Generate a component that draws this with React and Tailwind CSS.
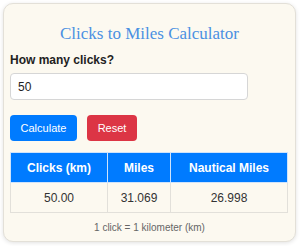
import React, { useState } from 'react';

const App = () => {
  const [clicks, setClicks] = useState('50');
  const km = parseFloat(clicks) || 0;

  return (
    <div className="w-[300px] h-[246px] bg-white p-[3px] font-['Liberation_Sans',Arial,sans-serif]">
      <div className="h-[239px] w-[293px] bg-[#fcf9f0] border border-[#e3e0d8] rounded-[10px] shadow-[0_1px_4px_rgba(0,0,0,0.12)] px-[6px] pt-[20px]">
        {/* Titel */}
        <h1 className="text-center text-[17px] leading-[20px] text-[#4a90e2] font-['Liberation_Serif',serif]">
          Clicks to Miles Calculator
        </h1>

        <label className="block mt-[9px] text-[12px] leading-[14px] font-bold text-[#222]">
          How many clicks?
        </label>
        <input
          value={clicks}
          onChange={(e) => setClicks(e.target.value)}
          className="mt-[6px] block w-[238px] h-[27px] px-[7px] text-[12px] text-[#222] bg-white border border-[#d6d6d6] rounded-[4px] outline-none"
        />

        <div className="flex gap-[10px] mt-[15px]">
          <button className="h-[26px] w-[67px] bg-[#007bff] text-white text-[11px] rounded-[4px]">
            Calculate
          </button>
          <button className="h-[26px] w-[50px] bg-[#dc3545] text-white text-[11px] rounded-[4px]">
            Reset
          </button>
        </div>

        <table className="mt-[11px] w-[278px] border-collapse text-[12px] text-center">
          <thead>
            <tr className="bg-[#007bff] text-white font-bold h-[30px]">
              <th className="w-[97px] border border-[#cfe3fb]">Clicks (km)</th>
              <th className="w-[63px] border border-[#cfe3fb]">Miles</th>
              <th className="border border-[#cfe3fb]">Nautical Miles</th>
            </tr>
          </thead>
          <tbody>
            <tr className="h-[30px] text-[#333]">
              <td className="border border-[#e2e0da]">{km.toFixed(2)}</td>
              <td className="border border-[#e2e0da]">{(km * 0.621371).toFixed(3)}</td>
              <td className="border border-[#e2e0da]">{(km * 0.539957).toFixed(3)}</td>
            </tr>
          </tbody>
        </table>

        <p className="mt-[8px] text-center text-[10px] leading-[14px] text-[#666]">1 click = 1 kilometer (km)</p>
      </div>
    </div>
  );
};

export default App;
